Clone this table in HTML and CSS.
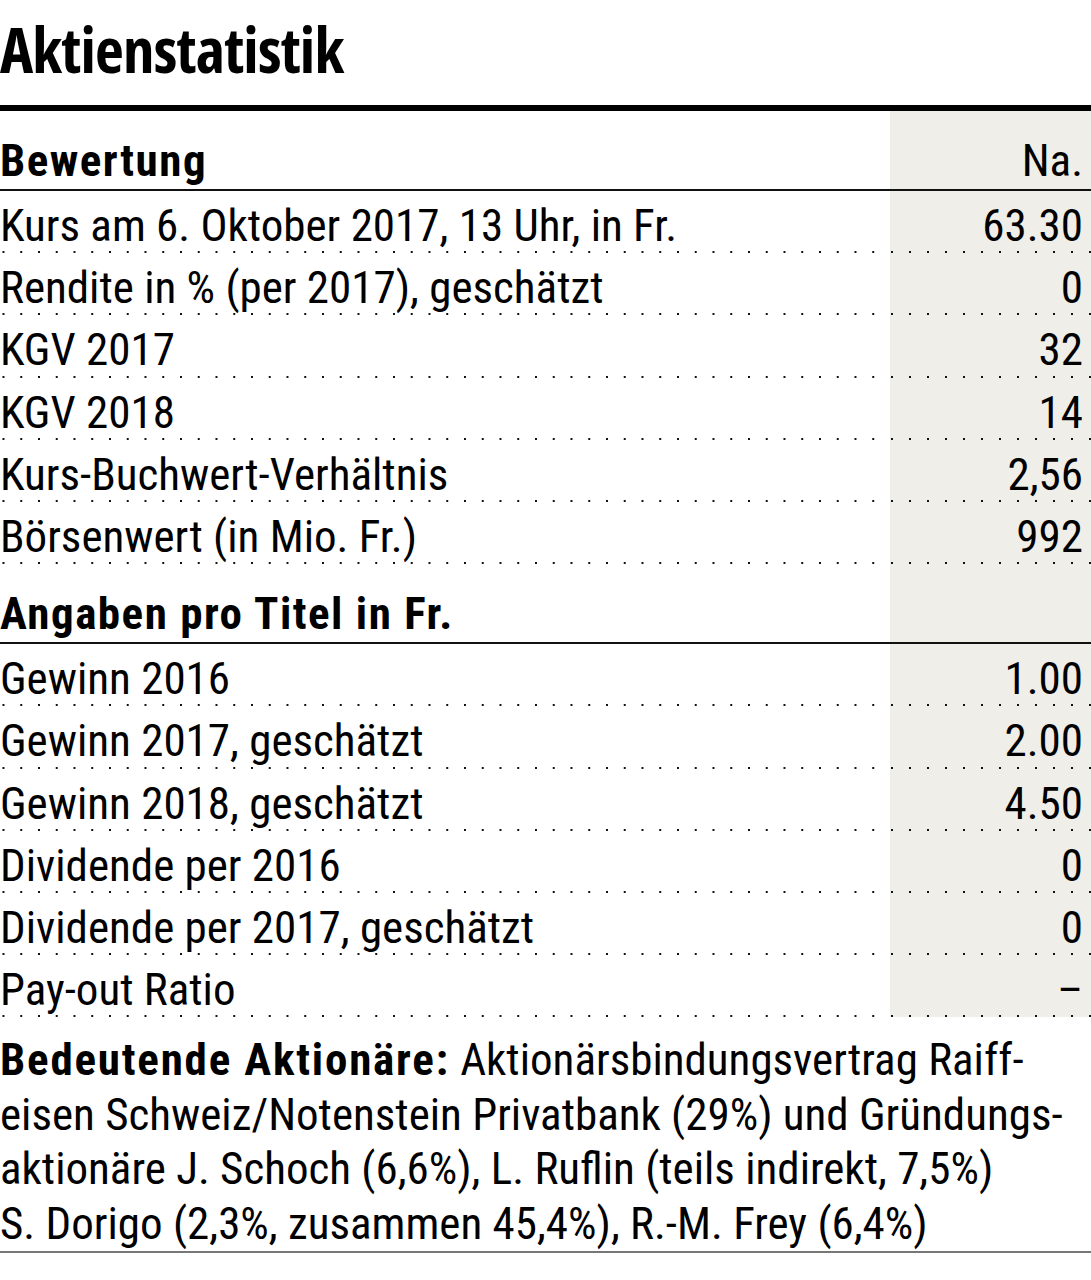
FILE: index.html
```html
<!DOCTYPE html>
<html lang="de">
<head>
<meta charset="utf-8">
<title>Aktienstatistik</title>
<link rel="stylesheet" href="styles.css">
</head>
<body>
<main class="stats">
  <h1 class="title">Aktienstatistik</h1>
  <div class="table">
    <div class="row head"><span class="label">Bewertung</span><span class="val">Na.</span></div>
    <div class="row"><span class="label">Kurs am 6. Oktober 2017, 13 Uhr, in Fr.</span><span class="val">63.30</span></div>
    <div class="row"><span class="label">Rendite in % (per 2017), geschätzt</span><span class="val">0</span></div>
    <div class="row"><span class="label">KGV 2017</span><span class="val">32</span></div>
    <div class="row"><span class="label">KGV 2018</span><span class="val">14</span></div>
    <div class="row"><span class="label">Kurs-Buchwert-Verhältnis</span><span class="val">2,56</span></div>
    <div class="row"><span class="label">Börsenwert (in Mio. Fr.)</span><span class="val">992</span></div>
    <div class="row head"><span class="label">Angaben pro Titel in Fr.</span><span class="val"></span></div>
    <div class="row"><span class="label">Gewinn 2016</span><span class="val">1.00</span></div>
    <div class="row"><span class="label">Gewinn 2017, geschätzt</span><span class="val">2.00</span></div>
    <div class="row"><span class="label">Gewinn 2018, geschätzt</span><span class="val">4.50</span></div>
    <div class="row"><span class="label">Dividende per 2016</span><span class="val">0</span></div>
    <div class="row"><span class="label">Dividende per 2017, geschätzt</span><span class="val">0</span></div>
    <div class="row"><span class="label">Pay-out Ratio</span><span class="val">–</span></div>
  </div>
  <p class="note">
    <span class="line"><b>Bedeutende Aktionäre:</b> Aktionärsbindungsvertrag Raiff-</span>
    <span class="line">eisen Schweiz/Notenstein Privatbank (29%) und Gründungs-</span>
    <span class="line">aktionäre J. Schoch (6,6%), L. Ruflin (teils indirekt, 7,5%)</span>
    <span class="line">S. Dorigo (2,3%, zusammen 45,4%), R.-M. Frey (6,4%)</span>
  </p>
</main>
</body>
</html>
```
FILE: styles.css
```css
html, body {
  margin: 0;
  padding: 0;
  background: #fff;
}
body {
  font-family: Roboto, "Open Sans", "Liberation Sans", sans-serif;
  font-stretch: 75%;
  color: #000;
  width: 1091px;
}
.stats {
  display: flex;
  flex-direction: column;
}
.title {
  margin: 0 0 25px 0;
  padding-top: 17px;
  font-family: "Open Sans", "Liberation Sans", sans-serif;
  font-size: 63px;
  line-height: 63px;
  font-weight: 700;
  font-stretch: 75%;
  letter-spacing: -0.8px;
}
.table {
  border-top: 6px solid #000;
  display: flex;
  flex-direction: column;
}
.row {
  display: grid;
  grid-template-columns: 890px 201px;
  font-size: 45px;
  height: 62.2px;
  box-sizing: border-box;
}
.row .label,
.row .val {
  padding-top: 9px;
  line-height: 52px;
  white-space: nowrap;
  background-repeat: repeat-x;
}
.row .label {
  background-image: linear-gradient(to right, #111 2px, transparent 2px);
  background-size: 17.75px 2px;
  background-position: right bottom;
}
.row .val {
  text-align: right;
  padding-right: 8px;
  background-color: #efeee9;
  background-image: linear-gradient(to right, #111 2px, transparent 2px);
  background-size: 18px 2px;
  background-position: 1px bottom;
}
.row.head {
  height: 80px;
  border-bottom: 2px solid #111;
}
.row.head .label,
.row.head .val {
  padding-top: 22px;
  line-height: 56px;
  background-image: none;
}
.row.head .label {
  font-weight: 700;
  letter-spacing: 1.5px;
}
.note {
  margin: 16px 0 0 0;
  font-size: 45px;
  line-height: 54.5px;
  border-bottom: 2px solid #777;
  display: flex;
  flex-direction: column;
}
.note .line {
  white-space: nowrap;
}
.note b {
  font-weight: 700;
  letter-spacing: 1.8px;
}
```
